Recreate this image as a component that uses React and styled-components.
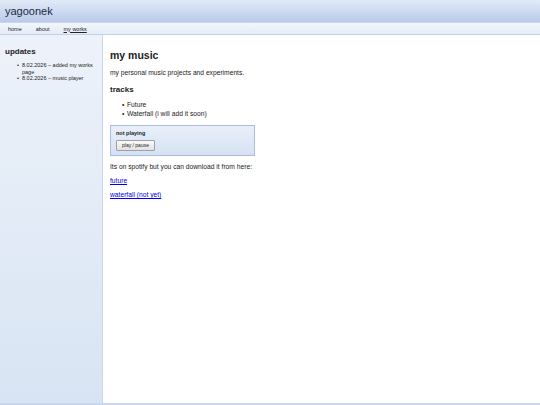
import React from "react"
import styled, {createGlobalStyle} from "styled-components"

const GlobalStyle = createGlobalStyle`
	html, body {
		margin: 0;
		padding: 0;
		height: 100%;
	}
	body {
		font-family: "Liberation Sans", Arial, sans-serif;
		color: #222;
		background: #fff;
	}
	#root {
		height: 100%;
	}
`

const updates = [
	"8.02.2026 – added my works page",
	"8.02.2026 – music player",
]

const tracks = ["Future", "Waterfall (i will add it soon)"]

export default function App() {
	return (
		<>
			<GlobalStyle />
			<Page>
				<Header>yagoonek</Header>
				<Nav>
					<NavLink>home</NavLink>
					<NavLink>about</NavLink>
					<NavLink $active>my works</NavLink>
				</Nav>
				<Body>
					<Sidebar>
						<SideTitle>updates</SideTitle>
						<SideList>
							{updates.map((u) => <li key={u}>{u}</li>)}
						</SideList>
					</Sidebar>
					<Main>
						<Title>my music</Title>
						<Text>my personal music projects and experiments.</Text>
						<SubTitle>tracks</SubTitle>
						<TrackList>
							{tracks.map((t) => <li key={t}>{t}</li>)}
						</TrackList>
						<Player>
							<Status>not playing</Status>
							<PlayButton>play / pause</PlayButton>
						</Player>
						<Text>Its on spotify but you can download it from here:</Text>
						<Text><Link href="#">future</Link></Text>
						<Text><Link href="#">waterfall (not yet)</Link></Text>
					</Main>
				</Body>
				<Footer />
			</Page>
		</>
	)
}

const Page = styled.div`
	height: 100%;
	display: flex;
	flex-direction: column;
`

const Header = styled.div`
	height: 22px;
	flex-shrink: 0;
	box-sizing: border-box;
	padding: 5px 5px 0;
	font-size: 11px;
	line-height: 13px;
	color: #1c2740;
	background: linear-gradient(#e1eaf7, #b9cbea);
`

const Nav = styled.div`
	height: 11px;
	flex-shrink: 0;
	display: flex;
	align-items: center;
	gap: 14px;
	padding: 0 8px;
	border-top: 1px solid #c9d7ee;
	border-bottom: 1px solid #c2d1ea;
	background: linear-gradient(#f2f6fc, #e4ecf8);
`

const NavLink = styled.span`
	font-size: 5.5px;
	color: #222;
	text-decoration: ${(p) => (p.$active ? "underline" : "none")};
`

const Body = styled.div`
	flex: 1;
	display: flex;
	min-height: 0;
`

const Sidebar = styled.div`
	width: 103px;
	flex-shrink: 0;
	box-sizing: border-box;
	padding: 12px 5px;
	border-right: 1px solid #c9d7ec;
	background: linear-gradient(#edf2fa, #d8e4f3);
`

const SideTitle = styled.div`
	font-size: 8px;
	font-weight: bold;
	margin-bottom: 6px;
`

const BulletList = styled.ul`
	margin: 0;
	list-style: none;
	li::before {
		content: "•";
		display: inline-block;
		width: 5px;
		margin-left: -5px;
	}
`

const SideList = styled(BulletList)`
	padding-left: 17px;
	font-size: 5.5px;
	line-height: 6.5px;
`

const Main = styled.div`
	flex: 1;
	padding: 14px 7px;
`

const Title = styled.div`
	font-size: 10.5px;
	font-weight: bold;
	margin-bottom: 8px;
`

const Text = styled.div`
	font-size: 6.7px;
	margin-bottom: 7px;
`

const SubTitle = styled.div`
	font-size: 8px;
	font-weight: bold;
	margin: 9px 0 6px;
`

const TrackList = styled(BulletList)`
	margin-bottom: 7px;
	padding-left: 17px;
	font-size: 6.7px;
	line-height: 9px;
`

const Player = styled.div`
	width: 145px;
	box-sizing: border-box;
	padding: 4px 5px;
	margin-bottom: 7px;
	border: 1px solid #a9bde0;
	background: linear-gradient(#e9f0fa, #d5e1f3);
`

const Status = styled.div`
	font-size: 5.5px;
	line-height: 7px;
	font-weight: bold;
	margin-bottom: 3px;
`

const PlayButton = styled.button`
	display: block;
	height: 11px;
	box-sizing: border-box;
	font-family: "Liberation Sans", Arial, sans-serif;
	font-size: 5px;
	line-height: 7px;
	padding: 0 5px;
	color: #222;
	border: 1px solid #a0a0a0;
	border-radius: 1px;
	background: linear-gradient(#fafafa, #e2e2e2);
`

const Link = styled.a`
	color: #0000ee;
	text-decoration: underline;
`

const Footer = styled.div`
	height: 2px;
	flex-shrink: 0;
	background: #c9d7ee;
`
